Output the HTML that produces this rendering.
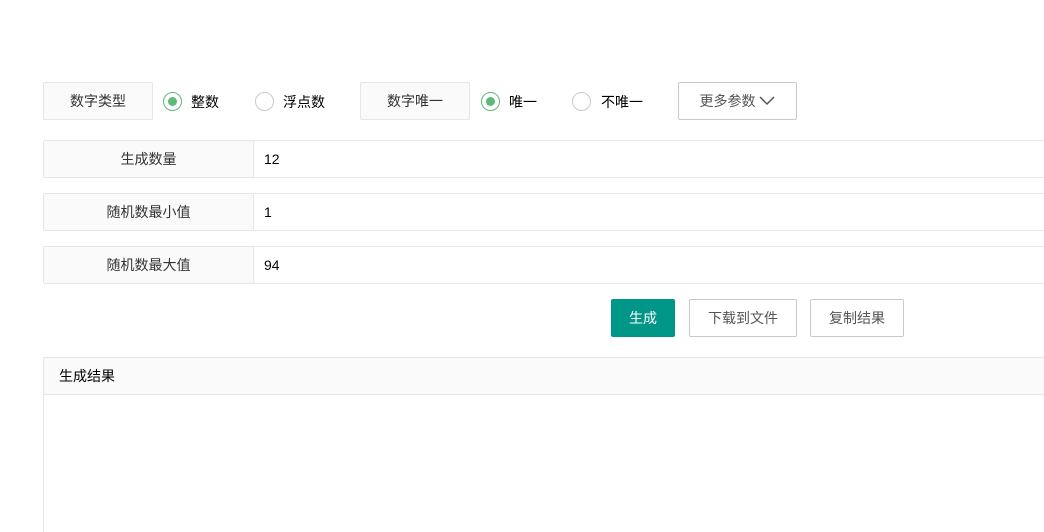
<!DOCTYPE html>
<html><head><meta charset="utf-8"><style>
html,body{margin:0;width:1044px;height:532px;overflow:hidden}
body{background:#fff;font-family:"Liberation Sans","Noto Sans CJK SC",sans-serif;font-size:14px;color:#333;position:relative}
.a{position:absolute;box-sizing:border-box}
.lab{background:#fafafa;border:1px solid #e6e6e6;border-radius:2px;text-align:center;color:#333}
.row{border:1px solid #e6e6e6;border-right:none;border-radius:2px 0 0 2px;left:43px;width:1010px;height:38px}
.row .l{position:absolute;left:0;top:0;width:209px;height:36px;background:#fafafa;border-right:1px solid #e6e6e6;text-align:center;line-height:36px}
.row .v{position:absolute;left:220px;top:0;line-height:36px;color:#000}
.rad{width:19px;height:19px;border:1px solid #c9c9c9;border-radius:50%}
.rad.on{border-color:#5fb878}
.rad.on::after{content:"";position:absolute;left:4px;top:4px;width:9px;height:9px;border-radius:50%;background:#5fb878}
.t{line-height:20px;color:#000}
.btn{border:1px solid #c9c9c9;border-radius:2px;height:38px;line-height:36px;text-align:center;color:#555}
</style></head><body>
<div class="a lab" style="left:43px;top:82px;width:110px;height:38px;line-height:36px">数字类型</div>
<div class="a rad on" style="left:163px;top:92px"></div><div class="a t" style="left:191px;top:92px">整数</div>
<div class="a rad" style="left:255px;top:92px"></div><div class="a t" style="left:283px;top:92px">浮点数</div>
<div class="a lab" style="left:360px;top:82px;width:110px;height:38px;line-height:36px">数字唯一</div>
<div class="a rad on" style="left:481px;top:92px"></div><div class="a t" style="left:509px;top:92px">唯一</div>
<div class="a rad" style="left:572px;top:92px"></div><div class="a t" style="left:601px;top:92px">不唯一</div>
<div class="a btn" style="left:678px;top:82px;width:119px;">更多参数 <svg width="16" height="10" style="vertical-align:0px"><path d="M1 1L8 8L15 1" fill="none" stroke="#555" stroke-width="1.5"/></svg></div>
<div class="a row" style="top:140px"><div class="l">生成数量</div><div class="v">12</div></div>
<div class="a row" style="top:193px"><div class="l">随机数最小值</div><div class="v">1</div></div>
<div class="a row" style="top:246px"><div class="l">随机数最大值</div><div class="v">94</div></div>
<div class="a btn" style="left:611px;top:299px;width:64px;background:#009688;border-color:#009688;color:#fff">生成</div>
<div class="a btn" style="left:689px;top:299px;width:108px">下载到文件</div>
<div class="a btn" style="left:810px;top:299px;width:94px">复制结果</div>
<div class="a" style="left:43px;top:357px;width:1010px;height:200px;border:1px solid #e6e6e6;border-right:none">
<div style="height:36px;background:#fafafa;border-bottom:1px solid #e6e6e6;line-height:36px;padding-left:15px;color:#000">生成结果</div>
</div>
</body></html>
